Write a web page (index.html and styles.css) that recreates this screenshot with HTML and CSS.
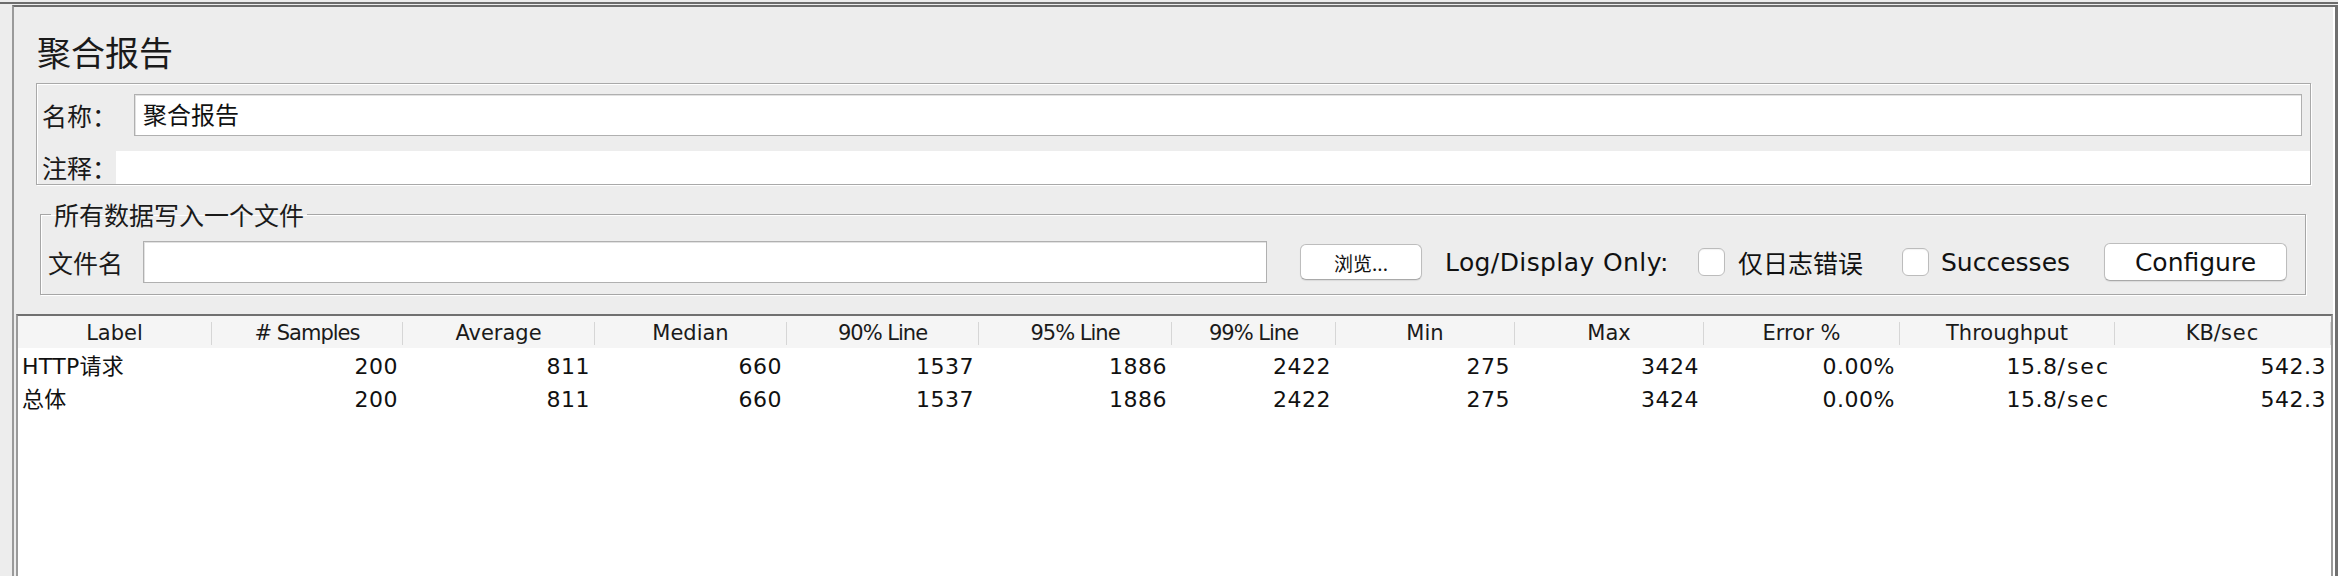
FILE: index.html
```html
<!DOCTYPE html>
<html lang="zh">
<head>
<meta charset="utf-8">
<title>聚合报告</title>
<link rel="stylesheet" href="styles.css">
</head>
<body>
<div class="window">
  <div class="topline"></div>
  <div class="panel">
    <div class="title">聚合报告</div>
    <div class="namebox">
      <div class="name-row">
        <span class="lbl name-lbl">名称：</span>
        <div class="input name-input">聚合报告</div>
      </div>
      <div class="comment-row">
        <span class="lbl comment-lbl">注释：</span>
        <div class="field"></div>
      </div>
    </div>
    <fieldset class="filebox">
      <legend>所有数据写入一个文件</legend>
      <div class="filerow">
        <span class="lbl file-lbl">文件名</span>
        <div class="input file-input"></div>
        <button class="btn browse">浏览...</button>
        <span class="txt log">Log/Display Only:</span>
        <span class="cb cb1"></span>
        <span class="txt errs">仅日志错误</span>
        <span class="cb cb2"></span>
        <span class="txt succ">Successes</span>
        <button class="btn configure">Configure</button>
      </div>
    </fieldset>
    <div class="table">
      <div class="grid thead">
        <div class="th">Label</div>
        <div class="th tight"># Samples</div>
        <div class="th">Average</div>
        <div class="th">Median</div>
        <div class="th tight">90% Line</div>
        <div class="th tight">95% Line</div>
        <div class="th tight">99% Line</div>
        <div class="th">Min</div>
        <div class="th">Max</div>
        <div class="th">Error %</div>
        <div class="th">Throughput</div>
        <div class="th">KB/<span class="unit">sec</span></div>
      </div>
      <div class="grid trow">
        <div class="td first">HTTP请求</div>
        <div class="td">200</div>
        <div class="td">811</div>
        <div class="td">660</div>
        <div class="td">1537</div>
        <div class="td">1886</div>
        <div class="td">2422</div>
        <div class="td">275</div>
        <div class="td">3424</div>
        <div class="td">0.00%</div>
        <div class="td">15.8<span class="unit">/sec</span></div>
        <div class="td">542.3</div>
      </div>
      <div class="grid trow">
        <div class="td first">总体</div>
        <div class="td">200</div>
        <div class="td">811</div>
        <div class="td">660</div>
        <div class="td">1537</div>
        <div class="td">1886</div>
        <div class="td">2422</div>
        <div class="td">275</div>
        <div class="td">3424</div>
        <div class="td">0.00%</div>
        <div class="td">15.8<span class="unit">/sec</span></div>
        <div class="td">542.3</div>
      </div>
    </div>
  </div>
</div>
</body>
</html>
```

FILE: styles.css
```css
* { box-sizing: border-box; }

html, body {
  margin: 0;
  padding: 0;
}

body {
  width: 2338px;
  height: 576px;
  overflow: hidden;
  background: #ededed;
  font-family: "DejaVu Sans", "Noto Sans CJK SC", sans-serif;
  color: #111;
}

.window {
  height: 576px;
  padding-top: 2px;
  display: flex;
  flex-direction: column;
}

.topline {
  flex: none;
  height: 2px;
  background: #6c6c6c;
}

.panel {
  flex: 1;
  min-height: 0;
  margin: 1px 0 0 12px;
  border-top: 2px solid #6c6c6c;
  border-left: 2px solid #9a9a9a;
  border-right: 3px solid #707070;
  box-shadow: inset -2px 0 0 #ffffff;
  display: flex;
  flex-direction: column;
}

.title {
  padding: 25px 0 0 23px;
  height: 65px;
  font-family: "Noto Sans CJK SC", sans-serif;
  font-size: 34px;
  line-height: 40px;
  color: #1a1a1a;
}

.lbl {
  flex: none;
  font-family: "Noto Sans CJK SC", sans-serif;
  font-size: 25px;
  color: #1a1a1a;
  white-space: nowrap;
}

/* name / comment box */
.namebox {
  margin: 11px 24px 0 22px;
  border: 1px solid #a9a9a9;
  box-shadow: 1px 1px 0 #ffffff, inset 1px 1px 0 #ffffff;
}

.name-row {
  display: flex;
  align-items: center;
  padding-top: 10px;
}

.name-lbl {
  width: 97px;
  padding-left: 5px;
}

.input {
  height: 42px;
  background: #ffffff;
  border: 1px solid #b0b0b0;
  box-shadow: inset 1px 1px 0 #e2e2e2;
}

.name-input {
  flex: 1;
  margin-right: 8px;
  padding-left: 8px;
  font-family: "Noto Sans CJK SC", sans-serif;
  font-size: 24px;
  line-height: 38px;
  color: #111;
}

.comment-row {
  display: flex;
  align-items: stretch;
  margin-top: 15px;
  height: 33px;
}

.comment-lbl {
  width: 79px;
  padding-left: 5px;
  line-height: 33px;
}

.field {
  flex: 1;
  background: #ffffff;
}

/* file section */
.filebox {
  margin: 14px 29px 0 26px;
  padding: 0 18px 11px 7px;
  border: 1px solid #a6a6a6;
  box-shadow: 1px 1px 0 #ffffff, inset 1px 1px 0 #ffffff;
  min-width: 0;
}

.filebox legend {
  margin-left: 3px;
  padding: 0 3px;
  font-family: "Noto Sans CJK SC", sans-serif;
  font-size: 25px;
  line-height: 30px;
  color: #1a1a1a;
}

.filerow {
  display: flex;
  align-items: center;
  height: 42px;
  margin-top: 12px;
}

.file-lbl {
  width: 95px;
}

.file-input {
  flex: none;
  width: 1124px;
}

.btn {
  flex: none;
  background: #ffffff;
  border: 1px solid #bdbdbd;
  border-bottom-color: #a9a9a9;
  border-radius: 6px;
  box-shadow: 0 1px 1px rgba(0, 0, 0, 0.08);
  color: #111;
  padding: 0;
  font-family: "DejaVu Sans", "Noto Sans CJK SC", sans-serif;
}

.browse {
  margin-left: 33px;
  width: 122px;
  height: 36px;
  font-family: "Noto Sans CJK SC", sans-serif;
  font-size: 19px;
}

.txt {
  flex: none;
  font-size: 25px;
  white-space: nowrap;
  color: #111;
}

.log {
  margin-left: 23px;
  width: 228px;
  letter-spacing: 0.4px;
}

.cb {
  flex: none;
  width: 27px;
  height: 28px;
  background: #ffffff;
  border: 1px solid #bcbcbc;
  border-radius: 6px;
  box-shadow: inset 0 1px 1px rgba(0, 0, 0, 0.05);
}

.cb1 { margin-left: 25px; }
.cb2 { margin-left: 35px; }

.errs {
  margin-left: 13px;
  width: 129px;
  font-family: "Noto Sans CJK SC", sans-serif;
}

.succ {
  margin-left: 12px;
  width: 127px;
}

.configure {
  margin-left: 36px;
  width: 183px;
  height: 38px;
  font-size: 25px;
}

/* table */
.table {
  flex: 1;
  margin: 19px 2px 0 2px;
  border-top: 2px solid #707070;
  border-left: 2px solid #9a9a9a;
  border-right: 2px solid #9a9a9a;
  background: #ffffff;
}

.grid {
  display: grid;
  grid-template-columns: 194px 191px 192px 192px 192px 193px 164px 179px 189px 196px 215px 1fr;
}

.thead {
  height: 32px;
  background: #f5f5f5;
}

.th {
  margin: 6px 0 3px;
  border-right: 1px solid #d6d6d6;
  text-align: center;
  font-size: 21px;
  line-height: 23px;
  color: #1a1a1a;
  white-space: nowrap;
}

.th.tight {
  letter-spacing: -1px;
}

.th .unit {
  letter-spacing: 1px;
}

.trow {
  height: 33px;
}

.td {
  text-align: right;
  padding: 4px 5px 0 0;
  font-size: 22px;
  line-height: 29px;
  letter-spacing: 0.5px;
  white-space: nowrap;
  color: #111;
}

.td .unit {
  letter-spacing: 2px;
}

.td.first {
  text-align: left;
  padding-left: 4px;
  padding-right: 0;
  letter-spacing: 0.3px;
}
```
